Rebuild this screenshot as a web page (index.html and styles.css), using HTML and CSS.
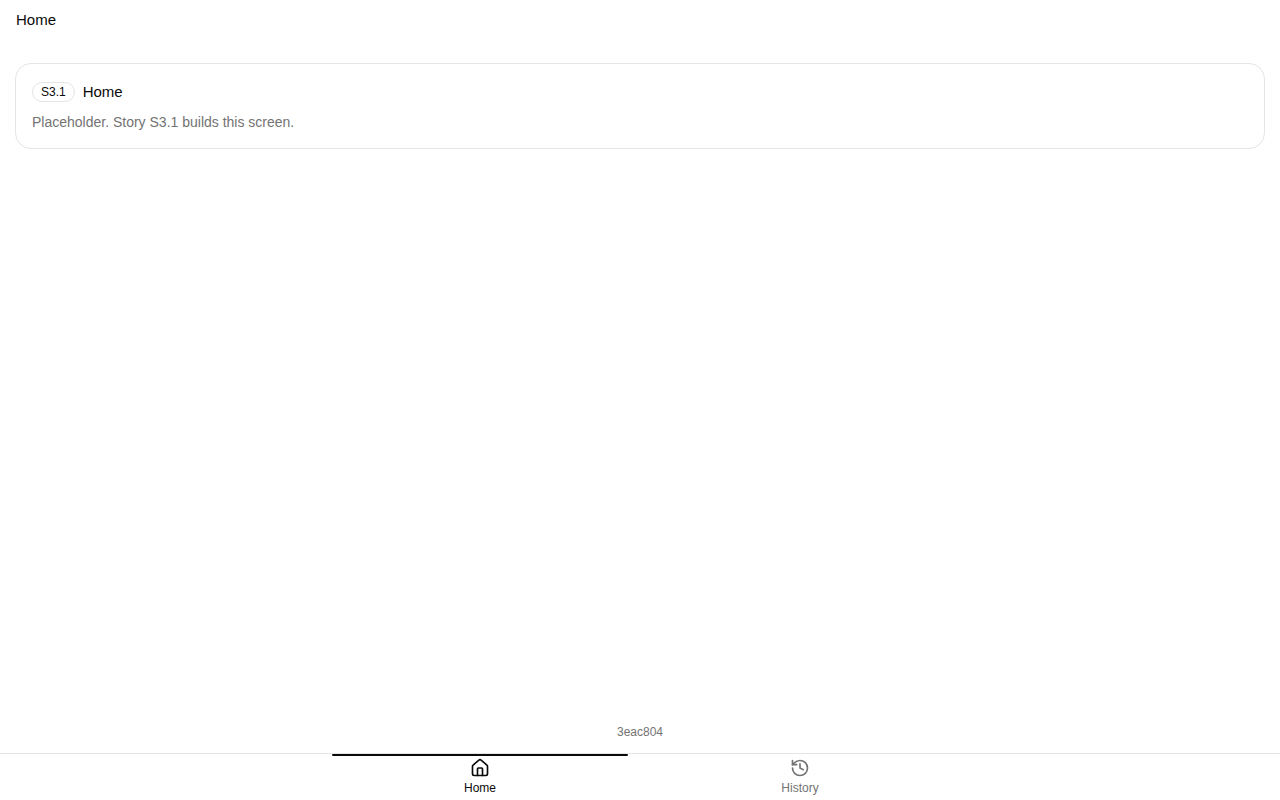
FILE: index.html
```html
<!DOCTYPE html>
<html lang="en">
<head>
  <meta charset="UTF-8">
  <meta name="viewport" content="width=device-width, initial-scale=1">
  <title>Home</title>
  <link rel="stylesheet" href="styles.css">
</head>
<body>
  <header class="topbar">
    <h1>Home</h1>
  </header>

  <main>
    <section class="card">
      <div class="card-head">
        <span class="badge">S3.1</span>
        <h2>Home</h2>
      </div>
      <p>Placeholder. Story S3.1 builds this screen.</p>
    </section>
  </main>

  <footer class="build">3eac804</footer>

  <nav class="tabs" aria-label="Main">
    <a class="tab active" href="#home" aria-current="page">
      <svg viewBox="0 0 24 24" aria-hidden="true">
        <path d="M15 21v-8a1 1 0 0 0-1-1h-4a1 1 0 0 0-1 1v8"/>
        <path d="M3 10a2 2 0 0 1 .709-1.528l7-6a2 2 0 0 1 2.582 0l7 6A2 2 0 0 1 21 10v9a2 2 0 0 1-2 2H5a2 2 0 0 1-2-2z"/>
      </svg>
      <span>Home</span>
    </a>
    <a class="tab" href="#history">
      <svg viewBox="0 0 24 24" aria-hidden="true">
        <path d="M3 12a9 9 0 1 0 9-9 9.75 9.75 0 0 0-6.74 2.74L3 8"/>
        <path d="M3 3v5h5"/>
        <path d="M12 7v5l4 2"/>
      </svg>
      <span>History</span>
    </a>
  </nav>
</body>
</html>
```
FILE: styles.css
```css
:root {
  --text: #0a0a0a;
  --muted: #737373;
  --border: #e5e5e5;
}
* {
  box-sizing: border-box;
}
body {
  margin: 0;
  min-height: 100vh;
  display: flex;
  flex-direction: column;
  font-family: "Liberation Sans", Arial, sans-serif;
  font-size: 16px;
  line-height: 24px;
  background: #fff;
  color: var(--text);
}
h1, h2, p {
  margin: 0;
}
h1, h2 {
  font-size: 15px;
  font-weight: 400;
}
.topbar {
  padding: 8px 16px;
}
main {
  flex: 1;
  padding: 23px 15px;
}
.card {
  padding: 16px;
  border: 1px solid var(--border);
  border-radius: 16px;
}
.card-head {
  display: flex;
  align-items: center;
  gap: 8px;
  margin-bottom: 8px;
}
.badge {
  padding: 1px 8px;
  border: 1px solid var(--border);
  border-radius: 10px;
  font-size: 12px;
  line-height: 16px;
}
.card p {
  font-size: 14px;
  line-height: 20px;
  color: var(--muted);
}
.build {
  padding: 0 16px 13px;
  text-align: center;
  font-size: 12px;
  line-height: 16px;
  color: var(--muted);
}
.tabs {
  display: flex;
  justify-content: center;
  border-top: 1px solid var(--border);
}
.tab {
  position: relative;
  flex: 0 1 320px;
  display: flex;
  flex-direction: column;
  align-items: center;
  gap: 2px;
  padding: 4px 0;
  font-size: 12px;
  line-height: 16px;
  color: var(--muted);
  text-decoration: none;
}
.tab svg {
  width: 20px;
  height: 20px;
  fill: none;
  stroke: currentColor;
  stroke-width: 2;
  stroke-linecap: round;
  stroke-linejoin: round;
}
.tab.active {
  color: var(--text);
}
.tab.active::before {
  content: "";
  position: absolute;
  top: 0;
  left: 12px;
  right: 12px;
  height: 2px;
  border-radius: 2px;
  background: var(--text);
}
```
